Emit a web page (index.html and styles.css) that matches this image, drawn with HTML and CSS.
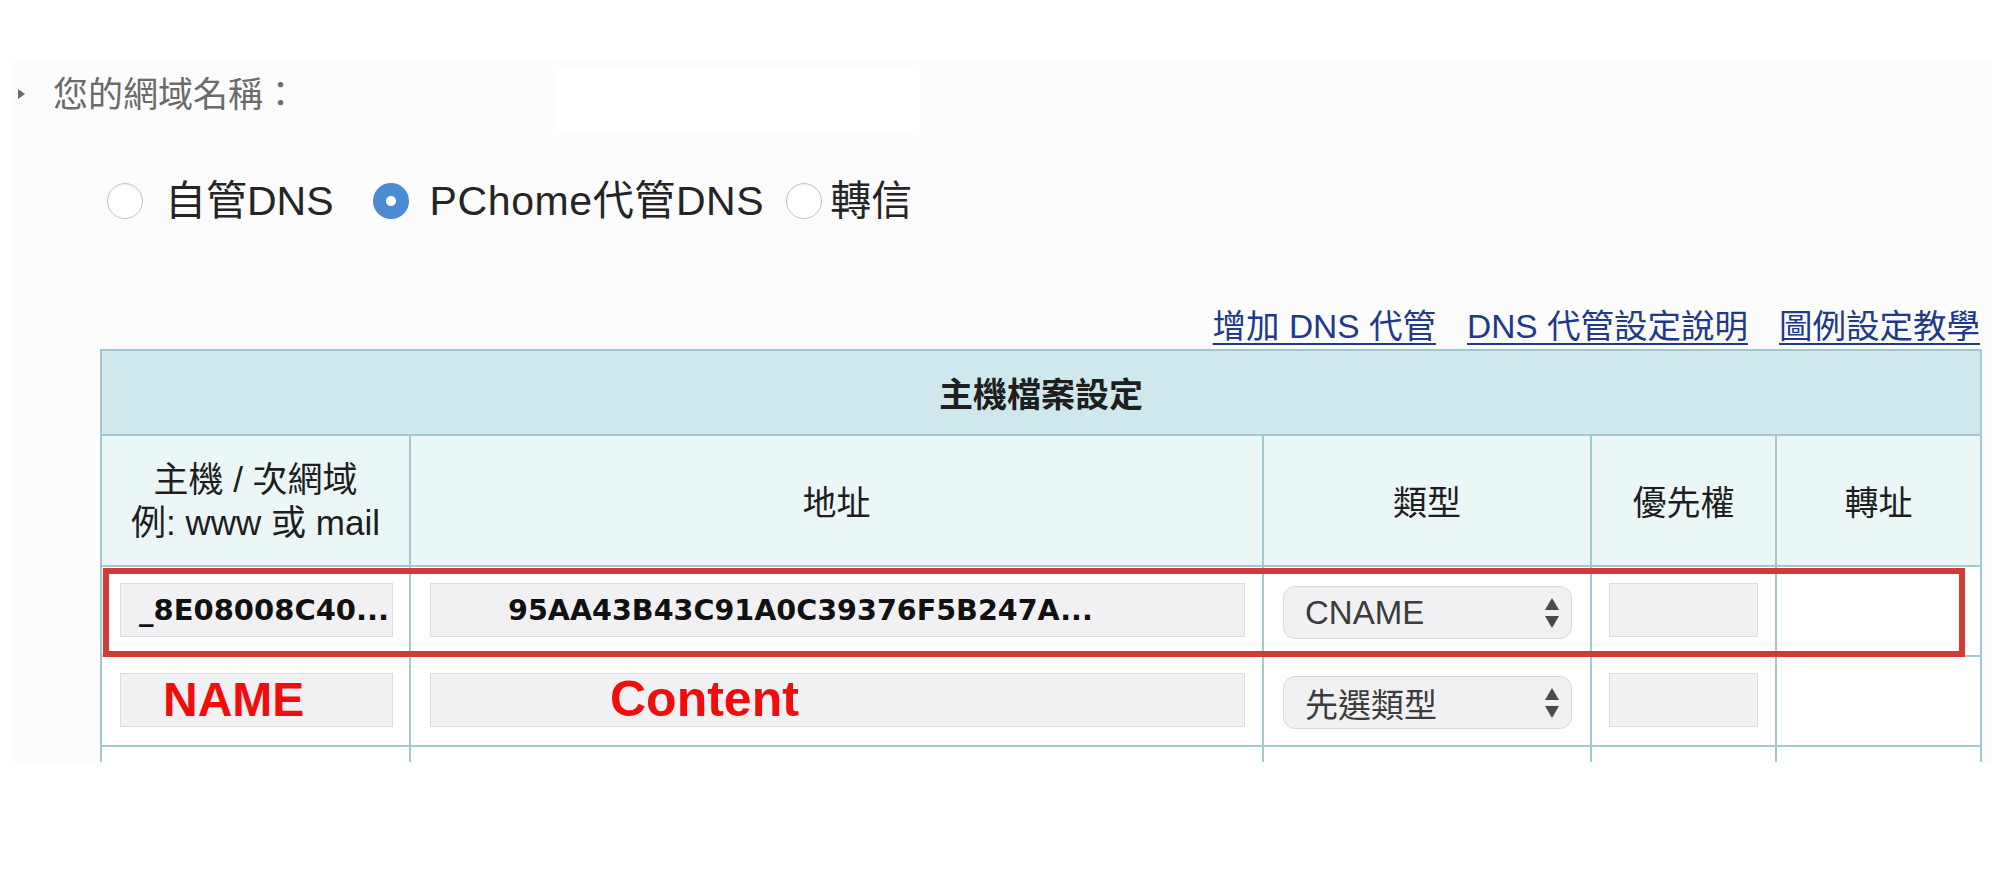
FILE: index.html
```html
<!DOCTYPE html>
<html lang="zh-Hant">
<head>
<meta charset="utf-8">
<title>DNS 代管設定</title>
<link rel="stylesheet" href="styles.css">
</head>
<body>
<div class="panel">
  <div class="domain">
    <span class="tri"></span>
    <span class="domain-label">您的網域名稱：</span>
    <span class="domain-value"></span>
  </div>

  <div class="radios">
    <div class="opt opt1"><span class="radio"></span><span class="opt-text">自管DNS</span></div>
    <div class="opt opt2"><span class="radio radio-on"></span><span class="opt-text">PChome代管DNS</span></div>
    <div class="opt opt3"><span class="radio"></span><span class="opt-text">轉信</span></div>
  </div>

  <div class="links">
    <a href="#">增加 DNS 代管</a>
    <a href="#">DNS 代管設定說明</a>
    <a href="#">圖例設定教學</a>
  </div>

  <div class="table-wrap">
    <table class="dns">
      <colgroup>
        <col class="c1"><col class="c2"><col class="c3"><col class="c4"><col class="c5">
      </colgroup>
      <tr class="title-row"><th colspan="5">主機檔案設定</th></tr>
      <tr class="head-row">
        <td><div class="two-line">主機 / 次網域<br>例: www 或 mail</div></td>
        <td>地址</td>
        <td>類型</td>
        <td>優先權</td>
        <td>轉址</td>
      </tr>
      <tr class="data-row">
        <td><div class="field f-name"><span class="val">_8E08008C40...</span></div></td>
        <td><div class="field f-addr"><span class="val val-addr">95AA43B43C91A0C39376F5B247A...</span></div></td>
        <td><div class="select"><span>CNAME</span><svg class="arrows" width="14" height="30" viewBox="0 0 14 30"><path d="M7 0 L14 12 L0 12 Z" fill="#4a4a4a"/><path d="M0 18 L14 18 L7 30 Z" fill="#4a4a4a"/></svg></div></td>
        <td><div class="field f-pri"></div></td>
        <td></td>
      </tr>
      <tr class="data-row">
        <td><div class="field f-name"><span class="note note-name">NAME</span></div></td>
        <td><div class="field f-addr"><span class="note note-content">Content</span></div></td>
        <td><div class="select"><span>先選類型</span><svg class="arrows" width="14" height="30" viewBox="0 0 14 30"><path d="M7 0 L14 12 L0 12 Z" fill="#4a4a4a"/><path d="M0 18 L14 18 L7 30 Z" fill="#4a4a4a"/></svg></div></td>
        <td><div class="field f-pri"></div></td>
        <td></td>
      </tr>
      <tr class="data-row">
        <td><div class="field f-name"></div></td>
        <td><div class="field f-addr"></div></td>
        <td><div class="select"></div></td>
        <td><div class="field f-pri"></div></td>
        <td></td>
      </tr>
    </table>
    <div class="highlight"></div>
  </div>
</div>
</body>
</html>
```

FILE: styles.css
```css
html, body {
  margin: 0;
  padding: 0;
  background: #ffffff;
}

body {
  font-family: "Liberation Sans", "Noto Sans CJK TC", sans-serif;
  color: #222222;
}

.panel {
  margin: 62px 0 0 10px;
  width: 1982px;
  height: 700px;
  background: #fcfcfc;
  overflow: hidden;
}

/* domain row */
.domain {
  display: flex;
  align-items: center;
  height: 64px;
  padding-left: 8px;
}

.tri {
  width: 0;
  height: 0;
  border-left: 7px solid #6a6a6a;
  border-top: 5.5px solid transparent;
  border-bottom: 5.5px solid transparent;
  margin-right: 28px;
}

.domain-label {
  font-size: 35px;
  line-height: 1;
  color: #6b6b6b;
}

.domain-value {
  width: 363px;
  height: 60px;
  margin-left: 258px;
  margin-top: 12px;
  background: #ffffff;
}

/* radio row */
.radios {
  display: flex;
  align-items: center;
  height: 74px;
  margin-top: 38px;
  padding-left: 97px;
}

.opt {
  display: flex;
  align-items: center;
}

.radio {
  box-sizing: border-box;
  width: 36px;
  height: 36px;
  border-radius: 50%;
  background: #ffffff;
  border: 1.5px solid #c4c4c4;
  box-shadow: inset 0 1px 2px rgba(0, 0, 0, 0.08);
}

.radio-on {
  border: none;
  background: radial-gradient(circle, #ffffff 0 4.5px, #4a8bd2 5.5px);
  box-shadow: none;
}

.opt-text {
  font-size: 41px;
  line-height: 1;
  color: #252525;
}

.opt1 .opt-text { margin-left: 22px; }
.opt2 { margin-left: 39px; }
.opt2 .opt-text { margin-left: 21px; letter-spacing: 0.6px; }
.opt3 { margin-left: 22px; }
.opt3 .opt-text { margin-left: 8px; }

/* links */
.links {
  display: flex;
  justify-content: flex-end;
  align-items: center;
  gap: 31px;
  height: 44px;
  margin-top: 67px;
  padding-right: 12px;
}

.links a {
  font-size: 33.5px;
  line-height: 1;
  color: #21398a;
  text-decoration: underline;
  text-decoration-thickness: 2px;
  text-underline-offset: 5px;
}

/* table */
.table-wrap {
  position: relative;
  margin-left: 90px;
  width: 1880px;
}

.dns {
  width: 1880px;
  table-layout: fixed;
  border-collapse: collapse;
  border: 2px solid #a2c9cf;
}

.dns col.c1 { width: 309px; }
.dns col.c2 { width: 853px; }
.dns col.c3 { width: 328px; }
.dns col.c4 { width: 185px; }
.dns col.c5 { width: 205px; }

.dns th,
.dns td {
  border: 2px solid #a2c9cf;
  padding: 0;
}

.title-row th {
  height: 83px;
  background: #cee8ee;
  font-size: 34px;
  font-weight: bold;
  color: #1e1e1e;
  text-align: center;
}

.head-row td {
  height: 129px;
  background: #ebf6f7;
  font-size: 34px;
  color: #1e1e1e;
  text-align: center;
  vertical-align: middle;
}

.two-line {
  font-size: 35px;
  line-height: 43px;
}

.data-row td {
  height: 88px;
  background: #ffffff;
  vertical-align: top;
}

.field {
  box-sizing: border-box;
  height: 54px;
  margin-top: 16px;
  background: #f1f1f4;
  border: 1.5px solid #dcdce0;
  white-space: nowrap;
}

.f-name {
  width: 273px;
  margin-left: 18px;
}

.f-addr {
  width: 815px;
  margin-left: 19px;
}

.f-pri {
  width: 149px;
  margin-left: 17px;
}

.val {
  display: block;
  font-family: "DejaVu Sans", sans-serif;
  font-weight: bold;
  font-size: 29px;
  line-height: 49px;
  color: #111111;
  padding-top: 2px;
  padding-left: 18px;
}

.val-addr {
  font-size: 28.6px;
  padding-left: 77px;
}

.note {
  display: block;
  font-family: "Liberation Sans", sans-serif;
  font-weight: bold;
  color: #f20c0c;
  line-height: 51px;
}

.note-name {
  font-size: 48px;
  padding-left: 42px;
}

.note-content {
  font-size: 50px;
  padding-left: 179px;
}

.select {
  box-sizing: border-box;
  display: flex;
  align-items: center;
  justify-content: space-between;
  width: 289px;
  height: 53px;
  margin: 19px 0 0 19px;
  padding: 0 12px 0 21px;
  background: #f1f1f4;
  border: 1.5px solid #d9d9de;
  border-radius: 12px;
  font-size: 33px;
  color: #3c3c3c;
}

.arrows {
  display: block;
}

/* annotation overlay */
.highlight {
  position: absolute;
  left: 3px;
  top: 219px;
  width: 1862px;
  height: 89px;
  box-sizing: border-box;
  border: 6px solid #d23a35;
  pointer-events: none;
}
```
